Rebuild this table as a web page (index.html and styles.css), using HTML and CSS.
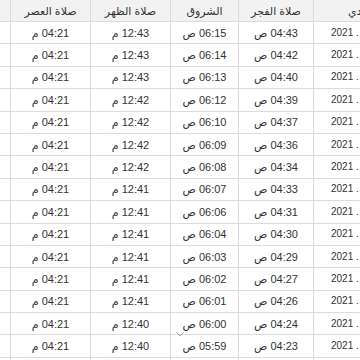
FILE: index.html
```html
<!DOCTYPE html>
<html lang="ar" dir="rtl">
<head>
<meta charset="utf-8">
<link rel="stylesheet" href="styles.css">
</head>
<body>
<div class="frame">
<div class="sheet">
<div class="row head"><div class="cell date">التاريخ الميلادي</div><div class="cell">صلاة الفجر</div><div class="cell">الشروق</div><div class="cell">صلاة الظهر</div><div class="cell">صلاة العصر</div><div class="cell">صلاة المغرب</div></div>
<div class="row"><div class="cell date">السبت 1 مايو . 2021</div><div class="cell">04:43 ص</div><div class="cell">06:15 ص</div><div class="cell">12:43 م</div><div class="cell">04:21 م</div><div class="cell">06:50 م</div></div>
<div class="row"><div class="cell date">الأحد 2 مايو . 2021</div><div class="cell">04:42 ص</div><div class="cell">06:14 ص</div><div class="cell">12:43 م</div><div class="cell">04:21 م</div><div class="cell">06:50 م</div></div>
<div class="row"><div class="cell date">الاثنين 3 مايو . 2021</div><div class="cell">04:40 ص</div><div class="cell">06:13 ص</div><div class="cell">12:43 م</div><div class="cell">04:21 م</div><div class="cell">06:51 م</div></div>
<div class="row"><div class="cell date">الثلاثاء 4 مايو . 2021</div><div class="cell">04:39 ص</div><div class="cell">06:12 ص</div><div class="cell">12:42 م</div><div class="cell">04:21 م</div><div class="cell">06:51 م</div></div>
<div class="row"><div class="cell date">الأربعاء 5 مايو . 2021</div><div class="cell">04:37 ص</div><div class="cell">06:10 ص</div><div class="cell">12:42 م</div><div class="cell">04:21 م</div><div class="cell">06:52 م</div></div>
<div class="row"><div class="cell date">الخميس 6 مايو . 2021</div><div class="cell">04:36 ص</div><div class="cell">06:09 ص</div><div class="cell">12:42 م</div><div class="cell">04:21 م</div><div class="cell">06:52 م</div></div>
<div class="row"><div class="cell date">الجمعة 7 مايو . 2021</div><div class="cell">04:34 ص</div><div class="cell">06:08 ص</div><div class="cell">12:42 م</div><div class="cell">04:21 م</div><div class="cell">06:53 م</div></div>
<div class="row"><div class="cell date">السبت 8 مايو . 2021</div><div class="cell">04:33 ص</div><div class="cell">06:07 ص</div><div class="cell">12:41 م</div><div class="cell">04:21 م</div><div class="cell">06:53 م</div></div>
<div class="row"><div class="cell date">الأحد 9 مايو . 2021</div><div class="cell">04:31 ص</div><div class="cell">06:06 ص</div><div class="cell">12:41 م</div><div class="cell">04:21 م</div><div class="cell">06:54 م</div></div>
<div class="row"><div class="cell date">الاثنين 10 مايو . 2021</div><div class="cell">04:30 ص</div><div class="cell">06:04 ص</div><div class="cell">12:41 م</div><div class="cell">04:21 م</div><div class="cell">06:54 م</div></div>
<div class="row"><div class="cell date">الثلاثاء 11 مايو . 2021</div><div class="cell">04:29 ص</div><div class="cell">06:03 ص</div><div class="cell">12:41 م</div><div class="cell">04:21 م</div><div class="cell">06:55 م</div></div>
<div class="row"><div class="cell date">الأربعاء 12 مايو . 2021</div><div class="cell">04:27 ص</div><div class="cell">06:02 ص</div><div class="cell">12:41 م</div><div class="cell">04:21 م</div><div class="cell">06:55 م</div></div>
<div class="row"><div class="cell date">الخميس 13 مايو . 2021</div><div class="cell">04:26 ص</div><div class="cell">06:01 ص</div><div class="cell">12:41 م</div><div class="cell">04:21 م</div><div class="cell">06:56 م</div></div>
<div class="row"><div class="cell date">الجمعة 14 مايو . 2021</div><div class="cell">04:24 ص</div><div class="cell">06:00 ص</div><div class="cell">12:40 م</div><div class="cell">04:21 م</div><div class="cell">06:56 م</div></div>
<div class="row"><div class="cell date">السبت 15 مايو . 2021</div><div class="cell">04:23 ص</div><div class="cell">05:59 ص</div><div class="cell">12:40 م</div><div class="cell">04:21 م</div><div class="cell">06:57 م</div></div>
<div class="row"><div class="cell date">الأحد 16 مايو . 2021</div><div class="cell">04:22 ص</div><div class="cell">05:58 ص</div><div class="cell">12:40 م</div><div class="cell">04:21 م</div><div class="cell">06:57 م</div></div>
</div>
<svg class="chev" width="10" height="6" viewBox="0 0 10 6"><path d="M1 1 L5 5 L9 1" fill="none" stroke="#b0b0b0" stroke-width="1"/></svg>
</div>
</body>
</html>
```

FILE: styles.css
```css
html, body {
  margin: 0;
  padding: 0;
  background: #fff;
}
.frame {
  position: relative;
  width: 360px;
  height: 360px;
  overflow: hidden;
  direction: rtl;
  background: #fff;
}
.sheet {
  display: flex;
  flex-direction: column;
  width: 490px;
  margin-right: -60px;
  font-family: "Liberation Sans", "DejaVu Sans", sans-serif;
  font-size: 11px;
  color: #333;
}
.row {
  display: grid;
  grid-template-columns: 107px 75px 68px 80px 80px 80px;
  height: 22.4px;
  box-sizing: border-box;
  border-bottom: 1px solid #dcdcdc;
}
.row.head {
  height: 22px;
  background: #f2f2f2;
}
.cell {
  display: flex;
  align-items: center;
  justify-content: center;
  white-space: nowrap;
  overflow: hidden;
  border-left: 1px solid #dcdcdc;
  line-height: 14px;
}
.cell.date {
  justify-content: flex-end;
  padding-left: 17px;
  font-size: 10px;
}
.head .cell {
  padding-top: 1px;
  color: #333;
}
.head .cell.date {
  padding-left: 34px;
  font-size: 11px;
}
.chev {
  position: absolute;
  left: 175px;
  top: 331px;
}
```
